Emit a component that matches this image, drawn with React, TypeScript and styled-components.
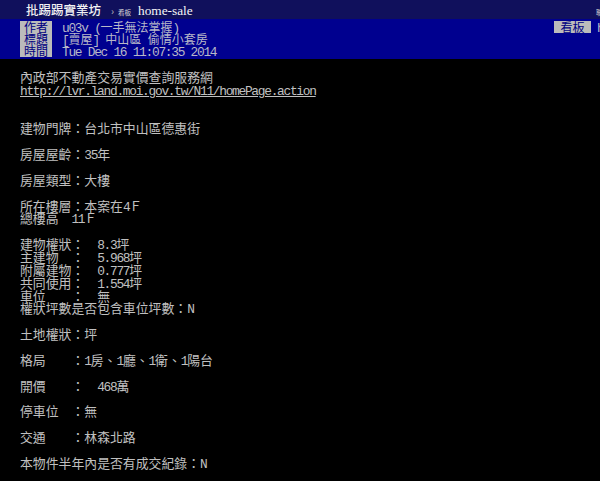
import React from 'react';
import styled, { createGlobalStyle } from 'styled-components';

const GlobalStyle = createGlobalStyle`
  html, body {
    margin: 0;
    padding: 0;
    background: #000;
  }
  body {
    font-family: "Noto Sans CJK TC", sans-serif;
    overflow: hidden;
  }
`;

type Meta = {
  tag: string;
  value: string;
  board?: string;
};

const metas: Meta[] = [
  { tag: '作者', value: 'u03v (一手無法掌握)', board: 'home-sale' },
  { tag: '標題', value: '[賣屋] 中山區 偷情小套房' },
  { tag: '時間', value: 'Tue Dec 16 11:07:35 2014' },
];

const lines: string[] = [
  '內政部不動產交易實價查詢服務網',
  '@http://lvr.land.moi.gov.tw/N11/homePage.action',
  '',
  '',
  '建物門牌：台北市中山區德惠街',
  '',
  '房屋屋齡：35年',
  '',
  '房屋類型：大樓',
  '',
  '所在樓層：本案在4Ｆ',
  '總樓高  11Ｆ',
  '',
  '建物權狀：  8.3坪',
  '主建物  ：  5.968坪',
  '附屬建物：  0.777坪',
  '共同使用：  1.554坪',
  '車位    ：  無',
  '權狀坪數是否包含車位坪數：N',
  '',
  '土地權狀：坪',
  '',
  '格局    ：1房、1廳、1衛、1陽台',
  '',
  '開價    ：  468萬',
  '',
  '停車位  ：無',
  '',
  '交通    ：林森北路',
  '',
  '本物件半年內是否有成交紀錄：N',
];

// split a string into half-width (ascii) and full-width runs
const Mixed = ({ text }: { text: string }) => {
  const parts = text.split(/([\x20-\x7e]+)/).filter((p) => p !== '');
  return (
    <>
      {parts.map((p, i) =>
        /^[\x20-\x7e]+$/.test(p) ? <Half key={i}>{p}</Half> : <span key={i}>{p}</span>
      )}
    </>
  );
};

const App = () => {
  return (
    <Page>
      <GlobalStyle />
      <TopBar>
        <SiteName>批踢踢實業坊</SiteName>
        <Arrow>›</Arrow>
        <BoardLabel>看板</BoardLabel>
        <BoardName>home-sale</BoardName>
        <TopRight>聯絡資訊</TopRight>
      </TopBar>
      <MetaBlock>
        {metas.map((m) => (
          <MetaLine key={m.tag}>
            <MetaTag>{m.tag}</MetaTag>
            <MetaValue>
              <Mixed text={m.value} />
            </MetaValue>
            {m.board && (
              <MetaRight>
                <MetaTag $wide>看板</MetaTag>
                <MetaValue>
                  <Mixed text={m.board} />
                </MetaValue>
              </MetaRight>
            )}
          </MetaLine>
        ))}
      </MetaBlock>
      <Content>
        {lines.map((l, i) =>
          l.startsWith('@') ? (
            <Line key={i}>
              <Link>
                <Mixed text={l.slice(1)} />
              </Link>
            </Line>
          ) : (
            <Line key={i}>
              <Mixed text={l} />
            </Line>
          )
        )}
      </Content>
    </Page>
  );
};

export default App;

const Page = styled.div`
  width: 600px;
  height: 481px;
  overflow: hidden;
  background: #000;
`;

const Half = styled.span`
  font-family: "Liberation Mono", monospace;
  font-size: 12.87px;
  letter-spacing: -1.29px;
`;

const TopBar = styled.div`
  width: 660px;
  height: 19px;
  box-sizing: border-box;
  padding: 2px 0 0 26px;
  background: #10105c;
  display: flex;
  align-items: baseline;
  line-height: 16px;
  white-space: nowrap;
`;

const SiteName = styled.span`
  font-size: 12.5px;
  color: #f2f2f2;
  font-weight: 500;
`;

const Arrow = styled.span`
  margin-left: 10px;
  font-size: 10px;
  color: #bbb;
`;

const BoardLabel = styled.span`
  margin-left: 4px;
  font-size: 6.5px;
  color: #ddd;
`;

const BoardName = styled.span`
  margin-left: 7px;
  font-family: "Liberation Serif", serif;
  font-size: 13.3px;
  font-weight: 500;
  color: #f6f6f6;
`;

const TopRight = styled.span`
  margin-left: auto;
  margin-right: 5px;
  width: 59px;
  font-size: 7px;
  color: #ccc;
`;

const MetaBlock = styled.div`
  width: 660px;
  box-sizing: border-box;
  height: 40px;
  padding: 2px 5px 2px 20px;
  background: #00008f;
`;

const MetaLine = styled.div`
  display: flex;
  height: 12px;
  line-height: 12px;
  font-size: 12px;
  white-space: pre;
`;

const MetaTag = styled.span<{ $wide?: boolean }>`
  width: ${({ $wide }) => ($wide ? '37px' : '32px')};
  text-align: center;
  background: #bbbbbb;
  color: #000080;
  flex-shrink: 0;
`;

const MetaValue = styled.span`
  margin-left: 10px;
  color: #b8b8c8;
  flex: 1;
`;

const MetaRight = styled.span`
  display: flex;
  width: 101px;
  flex-shrink: 0;

  ${MetaValue} {
    margin-left: 6px;
  }
`;

const Content = styled.div`
  padding: 12px 0 0 20px;
  color: #c0c0c0;
  font-size: 12.87px;
`;

const Line = styled.div`
  height: 12.87px;
  line-height: 12.87px;
  white-space: pre;
`;

const Link = styled.span`
  text-decoration: underline;
  text-underline-offset: 1px;
`;
